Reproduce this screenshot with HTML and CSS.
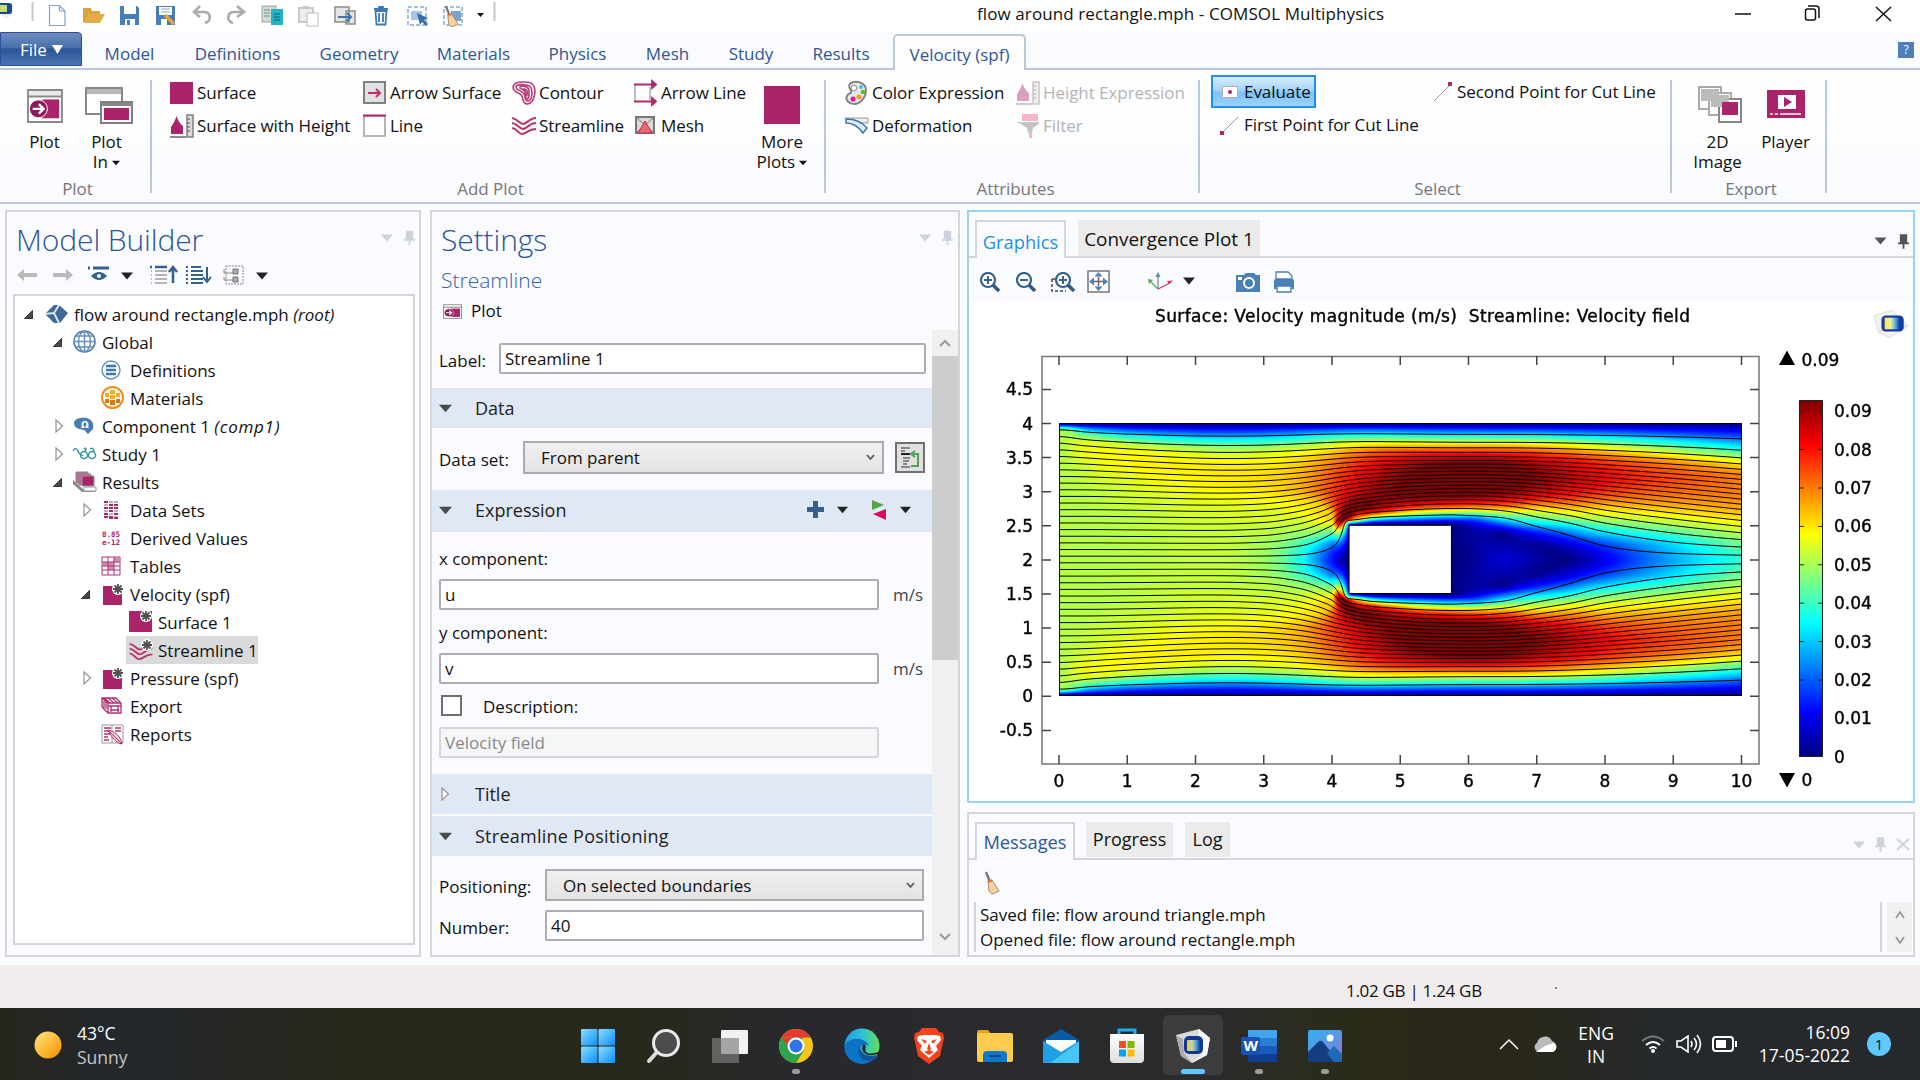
FILE: index.html
```html
<!DOCTYPE html>
<html lang="en">
<head>
<meta charset="utf-8">
<title>flow around rectangle.mph - COMSOL Multiphysics</title>
<link rel="stylesheet" href="styles.css">
</head>
<body>
<svg class="defs" width="0" height="0">
  <defs>
    <linearGradient id="gSun" x1="0" y1="0" x2="1" y2="1"><stop offset="0" stop-color="#ffe680"/><stop offset=".5" stop-color="#fdbb3a"/><stop offset="1" stop-color="#f98a06"/></linearGradient>
    <linearGradient id="gWin" x1="0" y1="0" x2="1" y2="1"><stop offset="0" stop-color="#8adfff"/><stop offset="1" stop-color="#0a8fff"/></linearGradient>
    <linearGradient id="gJet" x1="0" y1="0" x2="0" y2="1"><stop offset="0" stop-color="#800000"/><stop offset=".125" stop-color="#ff0000"/><stop offset=".375" stop-color="#ffff00"/><stop offset=".625" stop-color="#00ffff"/><stop offset=".875" stop-color="#0000ff"/><stop offset="1" stop-color="#000080"/></linearGradient>
    <linearGradient id="gLogo" x1="0" y1="0" x2="1" y2="0"><stop offset="0" stop-color="#ffe25a"/><stop offset=".4" stop-color="#f2f08a"/><stop offset=".7" stop-color="#58b8e8"/><stop offset="1" stop-color="#153aa0"/></linearGradient>
    <linearGradient id="gEdge" x1="0" y1="0" x2="1" y2="0"><stop offset="0" stop-color="#1b9de2"/><stop offset=".5" stop-color="#2fc0d8"/><stop offset="1" stop-color="#5fe05a"/></linearGradient>
    <linearGradient id="gStore" x1="0" y1="0" x2="0" y2="1"><stop offset="0" stop-color="#ffffff"/><stop offset="1" stop-color="#dedede"/></linearGradient>
    <linearGradient id="gPhoto" x1="0" y1="0" x2="1" y2="1"><stop offset="0" stop-color="#2fb2f2"/><stop offset="1" stop-color="#8a7ad8"/></linearGradient>
    <symbol id="caret" viewBox="0 0 12 8"><path d="M0 .5h12L6 7.500z" fill="currentColor"/></symbol>
    <symbol id="pin" viewBox="0 0 12 16"><path d="M2 0h8v9h2v2H7v5H5v-5H0V9h2z" fill="currentColor"/></symbol>
    <symbol id="open" viewBox="0 0 10 10"><path d="M9.5 .5v9H.5z" fill="#4a4a4a" stroke="#222"/></symbol>
    <symbol id="closed" viewBox="0 0 9 14"><path d="M1 1l6.500 6-6.500 6z" fill="#fff" stroke="#999" stroke-width="1.300"/></symbol>
    <symbol id="broom" viewBox="0 0 16 24"><path d="M2 1l4 10" stroke="#777" stroke-width="2.4" fill="none"/><path d="M4 10l4-1 7 11-4 2-3 1-3-3z" fill="#f3d3a4" stroke="#a98a5e"/><path d="M4 11l4-1.500" stroke="#e77439" stroke-width="2"/></symbol>
    <symbol id="plotwin" viewBox="0 0 38 36"><path d="M1 1h36v34H1z" fill="#fff" stroke="#8a8a8a" stroke-width="2"/><path d="M2 2h34v5H2z" fill="#e8ece8"/><path d="M1 8h36" stroke="#8a8a8a" stroke-width="2"/><path d="M16 11h18v20H16z" fill="#ab2369"/><circle cx="12" cy="21" r="9.500" fill="#8b1a5c" stroke="#fff"/><path d="M6 21h11M12.500 16l5 5-5 5" stroke="#fff" stroke-width="2.500" fill="none"/></symbol>
    <symbol id="stream" viewBox="0 0 24 20"><path d="M0 2c6 1 7 6 11 6s6-6 13-6M0 7c6 1 7 6 11 6s6-6 13-6M0 12c6 1 6 6 10 6s6-5 14-5" fill="none" stroke="#b8356f" stroke-width="2"/></symbol>
    <symbol id="peak" viewBox="0 0 24 24"><path d="M1 20V13C3 10 5 7 6.500 2c2 6 4 8 6.500 10v8z" fill="#ab2369"/><path d="M0 23h16" stroke="#8a8a8a" stroke-width="2"/><path d="M17 1h6v22h-6z" fill="#d9d9d9" stroke="#808080" stroke-width="1.500"/><path d="M17 5h3M17 9h3M17 13h3M17 17h3" stroke="#555"/></symbol>
    <symbol id="star" viewBox="0 0 12 12"><circle cx="6" cy="6" r="6" fill="#fff"/><path d="M6 1v10M1 6h10M2.500 2.500l7 7M9.500 2.500l-7 7" stroke="#505050" stroke-width="1.800"/></symbol>
    <symbol id="surf" viewBox="0 0 22 22"><path d="M1 3h19v19H1z" fill="#ab2369"/><use href="#star" x="10" y="0" width="12" height="12"/></symbol>
    <symbol id="mag" viewBox="0 0 22 20"><path d="M14 13l6 6" stroke="#35597f" stroke-width="3.500"/><circle cx="9" cy="8" r="7" fill="#fff" stroke="#35608f" stroke-width="2.200"/></symbol>
    <symbol id="logo" viewBox="0 0 34 28"><path d="M1 6L18 1l15 15-17 11-11-5z" fill="#f1f1f1" stroke="#e2e2e2"/><path d="M5 22l12-6 16 0" fill="none" stroke="#dedede"/><rect x="8" y="6" width="21" height="15" rx="4" fill="#153aa0"/><rect x="11" y="8" width="14" height="11" fill="url(#gLogo)"/></symbol>
  </defs>
</svg>

<header class="titlebar">
  <svg class="quick" width="510" height="32" viewBox="0 0 510 32">
    <path d="M0 12l13-10v12L6 19z" fill="#eee"/><rect x="-2" y="3" width="14" height="11" rx="3" fill="#17479c"/><rect x="0" y="5" width="7" height="7" fill="#c5dc73"/>
    <path d="M32.500 2v19M494.500 2v19" stroke="#c8c8c8" stroke-width="2"/>
    <path d="M49.500 5.500h10l5.500 5.500v14.500H49.500zM59.500 5.500V11H65" fill="#fff" stroke="#7fa3ca" stroke-width="1.200"/>
    <path d="M83 22V8h8l1 3h8v4h-9l-4 8z" fill="#dca23e"/><path d="M88 14h17l-5 9H84z" fill="#e3aa48"/>
    <path d="M120 6h17l2 2v17h-19z" fill="#477db8"/><path d="M124 6h12v8h-12zM125 19h10v6h-10z" fill="#fff"/><path d="M127 20h3v5h-3z" fill="#477db8"/>
    <path d="M156 6h19v19h-19z" fill="#477db8"/><path d="M159 7h13v8h-13zM161 19h6v6h-6z" fill="#fff"/><path d="M161 9h9M161 12h9" stroke="#8ba9c9"/><path d="M165 15l9 9" stroke="#e7a33d" stroke-width="3.500"/>
    <path d="M200 6l-6 6 6 5M195 12h9c7 0 8 9 1 11" fill="none" stroke="#ababab" stroke-width="2.600"/>
    <path d="M237 6l7 6-7 5M243 12h-9c-7 0-8 9-1 11" fill="none" stroke="#ababab" stroke-width="2.600"/>
    <path d="M262 6h14v16h-14z" fill="#d5dbd8" stroke="#9ba39f"/><path d="M264 10h6M264 13h6M264 16h6" stroke="#5c9c78"/><path d="M271 9h12v16h-12z" fill="#25b2c4"/><path d="M274 14h6M274 17h6M274 20h6" stroke="#0a6675"/>
    <path d="M299 8h14v14h-14z" fill="#eee" stroke="#c9c9c9" stroke-width="2"/><path d="M303 6h6v3h-6z" fill="#c9c9c9"/><path d="M307 13h11v13h-11z" fill="#fff" stroke="#bbb"/>
    <path d="M335 7h14v15h-14zM346 11h9v13h-9z" fill="#e5e5e5" stroke="#8c8c8c" stroke-width="1.500"/><path d="M338 17h12M347 13l4 4-4 4" fill="none" stroke="#3b73b6" stroke-width="2"/>
    <path d="M375.500 11h11l-1 13.500h-9zM374 9h14M379 9V7h4v2M379 13v9M383 13v9" fill="none" stroke="#3c79bb" stroke-width="1.800"/>
    <path d="M408 7h18v18h-18z" fill="none" stroke="#4c7eb5" stroke-dasharray="4 2"/><path d="M411 11h11v9h-11z" fill="#a9c4df"/><path d="M417 13l11 5-4 2 4 4-2 2-4-4-2 3z" fill="#3a6ea8"/>
    <path d="M444 7h18v18h-18z" fill="none" stroke="#4c7eb5" stroke-dasharray="4 2"/><path d="M451 11h10v10h-10z" fill="#78a2cf"/><use href="#broom" x="444" y="5" width="15" height="23"/>
    <use href="#caret" x="477" y="12" width="7" height="6"/>
  </svg>
  <h1 class="app-title">flow around rectangle.mph - COMSOL Multiphysics</h1>
  <svg class="winctl" width="160" height="32" viewBox="0 0 160 32" fill="none" stroke="#111" stroke-width="1.500"><path d="M0 14h16M141 7l15 14M156 7l-15 14"/><rect x="70.500" y="9" width="10" height="11" rx="2"/><path d="M73 6h8q3 0 3 3v9"/></svg>
</header>

<nav class="tabs">
  <span class="file">File <svg width="11" height="9"><path d="M0 0h11L5.500 9z" fill="#fff"/></svg></span>
  <span class="tab t1">Model</span><span class="tab t2">Definitions</span><span class="tab t3">Geometry</span><span class="tab t4">Materials</span><span class="tab t5">Physics</span><span class="tab t6">Mesh</span><span class="tab t7">Study</span><span class="tab t8">Results</span><span class="tab current">Velocity (spf)</span>
  <span class="help">?</span>
</nav>

<section class="ribbon">
  <div class="group g-plot">
    <div class="tools">
      <div class="big b1"><svg width="38" height="37"><use href="#plotwin" y="2" width="38" height="34"/></svg><span>Plot</span></div>
      <div class="big b2"><svg width="48" height="37"><path d="M1 1h36v26H1z" fill="#fff" stroke="#888" stroke-width="2"/><path d="M2 2h34v5H2z" fill="#b8b8b8"/><path d="M16 15h31v21H16z" fill="#fff" stroke="#808080" stroke-width="2"/><path d="M16 16h31v3H16z" fill="#888"/><path d="M19 21h25v12H19z" fill="#ab2369"/></svg><span>Plot<br>In <svg width="8" height="6"><use href="#caret" width="8" height="6"/></svg></span></div>
    </div>
    <div class="caption">Plot</div>
  </div>
  <div class="group g-add">
    <div class="tools cols">
      <div class="item"><svg width="24" height="24"><path d="M0 1h23v22H0z" fill="#ab2369"/></svg>Surface</div>
      <div class="item"><svg width="24" height="24"><path d="M1 1h21v21H1z" fill="#dfe3df" stroke="#808080" stroke-width="2"/><path d="M5 12h12M13 8l4 4-4 4" fill="none" stroke="#c02c70" stroke-width="2"/></svg>Arrow Surface</div>
      <div class="item"><svg width="24" height="24" fill="none" stroke="#bb3c76" stroke-width="1.600"><path d="M1 6C2 0 10 1 14 1c6 0 9 4 9 9 0 6-3 13-8 13-4 0-4-5-5-8-2-4-9-3-9-9z"/><path d="M4 6c1-4 7-2 10-2 5 0 6 4 6 8 0 5-2 8-4 8-4 0-2-4-4-7-2-4-8-3-8-7zM8 6c2-2 9-1 9 4s0 8-2 8-1-4-2-7-6-3-5-5zM12 8c3 0 4 2 3 6-2-1-1-4-3-6z"/></svg>Contour</div>
      <div class="item"><svg width="24" height="24" fill="none"><path d="M1 4v17M16 6v13" stroke="#aaa" stroke-width="1.500"/><path d="M0 3.500h20M0 20.500h20M18 0l4 3.500L18 7zM18 17l4 3.500-4 3.500z" stroke="#b02868" stroke-width="1.800" fill="#b02868"/></svg>Arrow Line</div>
      <div class="item"><svg width="24" height="24"><use href="#peak" width="24" height="24"/></svg>Surface with Height</div>
      <div class="item"><svg width="24" height="24"><path d="M1 2h21v20H1z" fill="#fff" stroke="#b5b5b5" stroke-width="2"/><path d="M0 1.500h23" stroke="#b02868" stroke-width="2"/></svg>Line</div>
      <div class="item"><svg width="24" height="20"><use href="#stream" width="24" height="20"/></svg>Streamline</div>
      <div class="item"><svg width="24" height="24"><path d="M2 3h18v16H2z" fill="#d8d8d8" stroke="#777" stroke-width="2"/><path d="M2 3l18 16M20 3L2 19" stroke="#777"/><path d="M11 7l7 12H4z" fill="#e46a72" stroke="#d0254b"/></svg>Mesh</div>
      <div class="big more"><svg width="36" height="38"><path d="M0 0h36v38H0z" fill="#ab2369"/></svg><span>More<br>Plots <svg width="8" height="6"><use href="#caret" width="8" height="6"/></svg></span></div>
    </div>
    <div class="caption">Add Plot</div>
  </div>
  <div class="group g-attr">
    <div class="tools cols">
      <div class="item"><svg width="24" height="24"><path d="M6 2c6-3 15 0 15 7s-5 14-12 14c-5 0-9-4-7-8 1-3 5-2 4-5S2 5 6 2z" fill="#e7e9e6" stroke="#858585" stroke-width="2"/><circle cx="9" cy="7" r="2.800" fill="#fff" stroke="#888"/><circle cx="16" cy="6" r="2" fill="#3fc4e8"/><circle cx="18" cy="11" r="2.300" fill="#66bd22"/><circle cx="14" cy="16" r="2.500" fill="#f79e20"/><circle cx="8" cy="18" r="2.500" fill="#ec148c"/></svg>Color Expression</div>
      <div class="item off"><svg width="24" height="24"><use href="#peak" width="24" height="24"/></svg>Height Expression</div>
      <div class="item"><svg width="24" height="24"><path d="M0 4h23v5H10" fill="#eee" stroke="#999"/><path d="M1 5c9 0 16 3 21 9l-4 5C13 12 8 9 1 9z" fill="#dcebf7" stroke="#3e75a8" stroke-width="1.500"/></svg>Deformation</div>
      <div class="item off"><svg width="24" height="24"><path d="M6 0h16v7H6zM13 16h3v8h-3z" fill="#ef4d82"/><path d="M0 8h23v2l-6 4-1 5h-4l-1-5-6-4z" fill="#777"/></svg>Filter</div>
    </div>
    <div class="caption">Attributes</div>
  </div>
  <div class="group g-sel">
    <div class="tools cols">
      <div class="item evaluate"><svg width="17" height="12"><path d="M.5.500h15v11H.5z" fill="#fff" stroke="#b9a9b5"/><circle cx="8" cy="6" r="2" fill="#b02868"/></svg>Evaluate</div>
      <div class="item"><svg width="20" height="20"><path d="M2 19L18 3" stroke="#999"/><path d="M16 0h4v4h-4z" fill="#b02868"/></svg>Second Point for Cut Line</div>
      <div class="item first"><svg width="20" height="20"><path d="M2 18L18 2" stroke="#999"/><path d="M0 16h4v4H0z" fill="#b02868"/></svg>First Point for Cut Line</div>
    </div>
    <div class="caption">Select</div>
  </div>
  <div class="group g-exp">
    <div class="tools">
      <div class="big b1"><svg width="44" height="37"><g fill="#fff" stroke="#aaa" stroke-width="2"><path d="M1 1h22v22H1z"/><path d="M11 7h22v22H11z"/><path d="M21 13h22v23H21z" stroke="#888"/></g><path d="M3 3h18v12H3zM13 9h18v12H13z" fill="#b9bcb9"/><path d="M24 16h16v13H24z" fill="#ab2369"/></svg><span>2D<br>Image</span></div>
      <div class="big b2"><svg width="38" height="37"><path d="M0 4h38v28H0z" fill="#ab2369"/><path d="M11 9h18v14H11z" fill="#fff"/><path d="M17 11l8 5-8 5z" fill="#ab2369"/><path d="M3 28h3M8 28h3M13 28h21" stroke="#e8bcd2" stroke-width="2"/></svg><span>Player</span></div>
    </div>
    <div class="caption">Export</div>
  </div>
</section>

<main class="workspace">
  <section class="panel builder">
    <div class="panel-head"><h2>Model Builder</h2><span class="dock"><svg width="12" height="8"><use href="#caret"/></svg><svg width="11" height="16"><use href="#pin"/></svg></span></div>
    <svg class="tree-tools" width="260" height="24" viewBox="0 0 260 24" fill="none">
      <path d="M0 12l7-6v4h13v4H7v4zM56 12l-7-6v4H36v4h13v4z" fill="#b9b9b9"/>
      <path d="M71 5h2M76 5h16" stroke="#35608f" stroke-width="3"/><path d="M74 13q8-8 16 0-8 8-16 0z" fill="#35608f"/><circle cx="82" cy="13" r="2" fill="#fff"/>
      <use href="#caret" x="104" y="9" width="12" height="8" color="#222"/>
      <path d="M133 4h2M138 4h12M156 20V6M152 9l4-5 4 5" stroke="#35608f" stroke-width="2.500"/><path d="M134 8h1M138 8h12M134 12h1M138 12h12M134 16h1M138 16h12M134 20h1M138 20h12" stroke="#b4b4b4" stroke-width="1.800"/>
      <path d="M169 4h2M174 4h10M190 4v14M186 14l4 5 4-5M169 8h2M174 8h12M169 12h2M174 12h12M169 16h2M174 16h12M169 20h2M174 20h12" stroke="#35608f" stroke-width="2"/>
      <path d="M209 3h17v18h-17z" stroke="#888" stroke-dasharray="2 1"/><path d="M207 6v4h9M207 14v3h9" stroke="#888"/><path d="M216 6h5v5h-5zM216 14h5v5h-5z" fill="#aaa" stroke="#777"/>
      <use href="#caret" x="239" y="9" width="12" height="8" color="#222"/>
    </svg>
    <ul class="tree">
      <li class="l0"><svg class="tw" width="9" height="9"><use href="#open"/></svg><svg class="ic" width="23" height="20"><path d="M0 10L9 1h5l9 8-8 10H9z" fill="#3f6799"/><path d="M0 10l9-1 5 10M9 9L14 1" fill="none" stroke="#dbe6f1" stroke-width="2"/></svg><span>flow around rectangle.mph <i>(root)</i></span></li>
      <li class="l1"><svg class="tw" width="9" height="9"><use href="#open"/></svg><svg class="ic" width="24" height="24" fill="none" stroke="#6a8fb8" stroke-width="1.500"><circle cx="11.500" cy="11.500" r="10.500" stroke="#4c79ac"/><ellipse cx="11.500" cy="11.500" rx="6" ry="10"/><path d="M11.500 1v21M1 11.500h21M3 6h17M3 17h17"/></svg><span>Global</span></li>
      <li class="l2"><svg class="ic" width="21" height="21"><circle cx="10" cy="10" r="9" fill="#fff" stroke="#5f90c2" stroke-width="1.400"/><path d="M5 6h10M5 10h10M5 14h10" stroke="#3b76b5" stroke-width="2.400"/></svg><span>Definitions</span></li>
      <li class="l2"><svg class="ic" width="24" height="24"><circle cx="11.500" cy="11.500" r="10.500" fill="#fff8ec" stroke="#f08c1d" stroke-width="2"/><path d="M9 4h5v4H9zM4 7h4v4H4zM15 7h4v4h-4zM9 9h5v4H9z" fill="#f5ad25"/><path d="M4 13h4v4H4zM9 14h5v5H9zM15 13h4v4h-4z" fill="#d97a12"/></svg><span>Materials</span></li>
      <li class="l1"><svg class="tw shut" width="9" height="14"><use href="#closed"/></svg><svg class="ic" width="22" height="18"><path d="M1 6C1 1 9 0 14 1c6 2 7 7 6 11l-5 5c-2-1-2-3-4-4C7 12 1 12 1 6z" fill="#477db3"/><text x="8" y="11" class="omega">Ω</text></svg><span>Component 1 <i class="wide">(comp1)</i></span></li>
      <li class="l1"><svg class="tw shut" width="9" height="14"><use href="#closed"/></svg><svg class="ic" width="24" height="14" fill="none" stroke="#3998a8" stroke-width="1.500"><path d="M0 4c2-4 4-3 6 2l4 3M11 2c2-2 3 0 1 2M17 2c3-2 4 1 4 4"/><circle cx="11" cy="8" r="3.500"/><circle cx="19" cy="8" r="3.500"/></svg><span>Study 1</span></li>
      <li class="l1"><svg class="tw" width="9" height="9"><use href="#open"/></svg><svg class="ic" width="24" height="22"><path d="M0 9l11 10h11v2H9L0 13z" fill="#888"/><path d="M3 1h12v11H3zM6 3h12v11H6z" fill="#c46798" stroke="#888"/><path d="M9 5h12v10H9z" fill="#ab2369" stroke="#999"/><path d="M11 16h12v4H11z" fill="#fff" stroke="#999"/></svg><span>Results</span></li>
      <li class="l2"><svg class="tw shut" width="9" height="14"><use href="#closed"/></svg><svg class="ic" width="18" height="19" fill="none" stroke-width="2"><g stroke="#b4b4b4" stroke-dasharray="4 1"><path d="M3 1h15M3 7h15M3 13h15M3 10h15M3 4h15M3 16h15"/></g><g stroke="#a82a68" stroke-dasharray="4 1"><path d="M3 1h4M8 4h9M3 7h14M8 10h4M3 13h4M13 13h4M3 16h9M8 17h9"/></g></svg><span>Data Sets</span></li>
      <li class="l2"><svg class="ic" width="20" height="18"><text x="1" y="8" class="dv">8.85</text><text x="1" y="16" class="dv">e-12</text></svg><span>Derived Values</span></li>
      <li class="l2"><svg class="ic" width="20" height="20"><path d="M1 1h18v18H1z" fill="#fff" stroke="#b03070"/><path d="M13 1h6v5h-6zM1 6h12v4h0v4H7v-4H1z" fill="#d08bad"/><path d="M1 6h18M1 10h18M1 14h18M7 1v18M13 1v18" stroke="#b03070"/></svg><span>Tables</span></li>
      <li class="l2"><svg class="tw" width="9" height="9"><use href="#open"/></svg><svg class="ic" width="22" height="22"><use href="#surf"/></svg><span>Velocity (spf)</span></li>
      <li class="l3"><svg class="ic" width="24" height="24"><path d="M0 1h23v21H0z" fill="#ab2369"/><use href="#star" x="11" width="12" height="12"/></svg><span>Surface 1</span></li>
      <li class="l3 selected"><svg class="ic" width="24" height="22"><use href="#stream" y="3" width="24" height="19"/><use href="#star" x="12" width="12" height="12"/></svg><span>Streamline 1</span></li>
      <li class="l2"><svg class="tw shut" width="9" height="14"><use href="#closed"/></svg><svg class="ic" width="22" height="22"><use href="#surf"/></svg><span>Pressure (spf)</span></li>
      <li class="l2"><svg class="ic" width="21" height="18" fill="none" stroke="#b03070" stroke-width="1.300"><path d="M1 1h14l5 5v10H7L1 10zM1 1l6 5h13M7 6v10M7 9h13M10 13h8M3 1l6 5M7 1l6 5M11 1l6 5M3 4v7M5 5v7M10 9v6M17 9v6"/></svg><span>Export</span></li>
      <li class="l2"><svg class="ic" width="23" height="21"><path d="M1 1h21v18H1zM11 1v18" fill="#fff" stroke="#999"/><path d="M3 4h7M3 7h6M3 10h6M3 13h4M3 16h5M14 4h6M14 7h6" stroke="#b03070" stroke-width="1.500"/><path d="M7 6c6 1 13 6 14 14-6-1-10-6-14-14zM8 7l13 13" fill="#f1cddc" stroke="#b03070"/></svg><span>Reports</span></li>
    </ul>
  </section>

  <section class="panel settings">
    <div class="panel-head"><h2>Settings</h2><span class="dock"><svg width="12" height="8"><use href="#caret"/></svg><svg width="11" height="16"><use href="#pin"/></svg></span></div>
    <h3>Streamline</h3>
    <div class="plot-btn"><svg width="19" height="15" viewBox="0 0 38 36" preserveAspectRatio="none"><use href="#plotwin" width="38" height="36"/></svg>Plot</div>
    <div class="scroll-area">
      <div class="form">
        <div class="row r-label"><label>Label:</label><span class="input">Streamline 1</span></div>
        <div class="section"><svg width="13" height="9"><use href="#caret"/></svg>Data</div>
        <div class="row r-data"><label>Data set:</label><span class="select">From parent<svg width="9" height="7"><path d="M1 1l3.500 4L8 1" fill="none" stroke="#555" stroke-width="1.800"/></svg></span><span class="tool"><svg width="20" height="22" fill="none"><path d="M1 2h9M1 5h4M3 12h7M3 15h6M3 18h4M1 21h9" stroke="#888" stroke-width="2"/><path d="M1 8h9" stroke="#222" stroke-width="2"/><path d="M11 20h7V8h-5M15 5l-4 3 4 3" stroke="#51a351" stroke-width="2"/></svg></span></div>
        <div class="section expr"><svg width="13" height="9"><use href="#caret"/></svg>Expression
          <svg class="expr-tools" width="108" height="22"><path d="M0 10.500h17M8.500 2v17" stroke="#35608f" stroke-width="5"/><use href="#caret" x="30" y="7" width="11" height="8" color="#222"/><path d="M65 1l12 5-12 5z" fill="#52a447"/><path d="M79 10v11l-13-6z" fill="#d80c5e"/><use href="#caret" x="93" y="7" width="11" height="8" color="#222"/></svg></div>
        <div class="lbl c1">x component:</div>
        <div class="row r-comp"><span class="input">u</span><span class="unit">m/s</span></div>
        <div class="lbl c2">y component:</div>
        <div class="row r-comp"><span class="input">v</span><span class="unit">m/s</span></div>
        <div class="row r-check"><span class="check"></span><span class="desc">Description:</span></div>
        <div class="row r-comp"><span class="input disabled">Velocity field</span></div>
        <div class="section s-title"><svg width="9" height="14"><use href="#closed"/></svg>Title</div>
        <div class="section s-pos"><svg width="13" height="9"><use href="#caret"/></svg>Streamline Positioning</div>
        <div class="row r-pos"><label>Positioning:</label><span class="select">On selected boundaries<svg width="9" height="7"><path d="M1 1l3.500 4L8 1" fill="none" stroke="#555" stroke-width="1.800"/></svg></span></div>
        <div class="row r-num"><label>Number:</label><span class="input">40</span></div>
      </div>
      <div class="scrollbar"><span class="sb-btn"><svg width="12" height="8"><path d="M1 7l5-5 5 5" fill="none" stroke="#999" stroke-width="2"/></svg></span><span class="thumb"></span><span class="sb-btn end"><svg width="12" height="8"><path d="M1 1l5 5 5-5" fill="none" stroke="#999" stroke-width="2"/></svg></span></div>
    </div>
  </section>

  <div class="right">
    <section class="panel graphics">
      <div class="ptabs"><span class="ptab active">Graphics</span><span class="ptab conv">Convergence Plot 1</span><span class="dock dark"><svg width="13" height="8"><use href="#caret"/></svg><svg width="11" height="15"><use href="#pin"/></svg></span></div>
      <svg class="gtools" width="330" height="37" viewBox="0 0 330 37" fill="none">
        <use href="#mag" x="9" y="8" width="22" height="20"/><path d="M14 16h8M18 12v8" stroke="#35608f" stroke-width="2"/>
        <use href="#mag" x="45" y="8" width="22" height="20"/><path d="M50 16h8" stroke="#35608f" stroke-width="2"/>
        <path d="M82 15v12h14M82 15h6" stroke="#444" stroke-dasharray="3 2" stroke-width="1.500"/><use href="#mag" x="84" y="8" width="22" height="20"/><path d="M89 16h8M93 12v8" stroke="#35608f" stroke-width="2"/>
        <path d="M118 7h21v21h-21z" fill="#fff" stroke="#777" stroke-width="1.500"/><path d="M128.500 8l4 4.500h-8zM128.500 27l4-4.500h-8zM119 17.500l5-4v8zM138 17.500l-5-4v8z" fill="#4b80b8"/><path d="M124 17.500h9M128.500 13v9" stroke="#666" stroke-width="1.500"/>
        <path d="M188 24V11" stroke="#5e87b4" stroke-width="1.200"/><path d="M185.500 13l2.500-5 2.500 5z" fill="#5e87b4"/><path d="M188 25l-7-7" stroke="#58aa50" stroke-width="1.200"/><path d="M178 15l5 1-4 4z" fill="#58aa50"/><path d="M188 25l12-6" stroke="#d6336c" stroke-width="1.200"/><path d="M197 17l6-.5-4 4z" fill="#d6336c"/>
        <use href="#caret" x="213" y="13" width="12" height="8" color="#222"/>
        <path d="M266 11h8l2-2h8l2 2h4v17h-24z" fill="#4b80b8"/><circle cx="279" cy="19" r="5" stroke="#fff" stroke-width="2"/><path d="M268 13h4v3h-4z" fill="#fff"/>
        <path d="M304 17q0-2 2-2h16q2 0 2 2v8h-20z" fill="#4b80b8"/><path d="M306 8h12l4 4v3h-16zM307 22h14v6h-14z" fill="#fff" stroke="#4b80b8" stroke-width="1.300"/>
      </svg>
      <div class="plot">
        <canvas id="field" width="683" height="273"></canvas>
        <svg class="axes" width="943" height="500" viewBox="969 301 943 500">
          <text x="1155" y="322" textLength="535" class="ptitle" xml:space="preserve">Surface: Velocity magnitude (m/s)  Streamline: Velocity field</text>
          <g id="ticks" fill="none" stroke="#444" stroke-width="1.500"><path d="M1042 356.500h717v407.500H1042z" stroke="#777"/></g>
          <g id="labels"></g>
          <rect x="1799.500" y="400.500" width="23" height="356" fill="url(#gJet)" stroke="#222"/>
          <g id="bar"></g>
          <path d="M1779 365l8-14.500 8 14.500zM1779 773l8 14.500 8-14.500z"/>
          <text x="1801.500" y="366">0.09</text><text x="1801.500" y="786">0</text>
          <use href="#logo" x="1873" y="309" width="36" height="30"/>
        </svg>
      </div>
    </section>
    <section class="panel messages">
      <div class="ptabs"><span class="ptab active">Messages</span><span class="ptab prog">Progress</span><span class="ptab log">Log</span><span class="dock"><svg width="12" height="8"><use href="#caret"/></svg><svg width="11" height="15"><use href="#pin"/></svg><svg width="14" height="13"><path d="M1 1l12 11M13 1L1 12" stroke="currentColor" stroke-width="2"/></svg></span></div>
      <svg class="sweep" width="16" height="24"><use href="#broom"/></svg>
      <div class="log-row"><div class="log-text">Saved file: flow around triangle.mph<br>Opened file: flow around rectangle.mph</div>
      <div class="log-sb"><svg width="10" height="8"><path d="M1 7l4-6 4 6" fill="none" stroke="#999" stroke-width="1.800"/></svg><svg width="10" height="8"><path d="M1 1l4 6 4-6" fill="none" stroke="#999" stroke-width="1.800"/></svg></div></div>
    </section>
  </div>
</main>

<footer class="status"><span class="mem">1.02 GB | 1.24 GB</span><span class="dot"></span></footer>

<div class="taskbar">
  <div class="weather"><svg width="28" height="28"><circle cx="14" cy="14" r="13.500" fill="url(#gSun)"/></svg><span>43°C<br><em>Sunny</em></span></div>
  <div class="apps">
    <span class="app"><svg width="36" height="36"><g fill="url(#gWin)"><rect x="1" y="1" width="16.500" height="16.500" rx="1"/><rect x="18.500" y="1" width="16.500" height="16.500" rx="1"/><rect x="1" y="18.500" width="16.500" height="16.500" rx="1"/><rect x="18.500" y="18.500" width="16.500" height="16.500" rx="1"/></g></svg></span>
    <span class="app"><svg width="36" height="36"><path d="M11 24L3 33" stroke="#dcdcdc" stroke-width="4" stroke-linecap="round"/><circle cx="20" cy="15" r="12.500" fill="#4a4c4d" stroke="#e9e9e9" stroke-width="3"/></svg></span>
    <span class="app"><svg width="38" height="36"><rect x="10" y="2" width="27" height="24" rx="1" fill="#f2f2f2"/><rect x="1" y="10" width="27" height="25" rx="1" fill="#626262"/><path d="M10 10h18v16H10z" fill="#a5a5a5"/></svg></span>
    <span class="app run"><svg width="36" height="36"><circle cx="18" cy="18" r="17" fill="#f6c51b"/><path d="M3.300 9.500A17 17 0 0 1 32.700 9.500H18z" fill="#e33b2e"/><path d="M3.300 9.500A17 17 0 0 0 18 35l8-12.500-8-4.500z" fill="#2da44e"/><path d="M3.300 9.500L11 23l7-5 7-8.500z" fill="#2da44e"/><path d="M3.300 9.500H33L18 10l-8 8z" fill="#e33b2e"/><circle cx="18" cy="18" r="8.500" fill="#fff"/><circle cx="18" cy="18" r="6.500" fill="#2f74e8"/></svg></span>
    <span class="app"><svg width="36" height="36"><circle cx="18" cy="18" r="17.500" fill="url(#gEdge)"/><path d="M1 17c3-8 20-9 24 1-6-3-10 0-9 6 1 5 7 9 14 7-8 7-18 5-23 1-5-4-7-9-6-15z" fill="#0b74c9"/><path d="M16 18c-4 6 0 15 9 15 5 0 8-3 9-6-6 2-18 1-18-9z" fill="#1054a2"/><path d="M20 16c4 3 0 5 2 8 4 3 10 1 14-1v5l-3-2c-7 3-15 0-15-6 0-2 1-3 2-4z" fill="#28292b"/></svg></span>
    <span class="app"><svg width="32" height="36"><path d="M9 0h14l3 4 4 1 1 5-1 4-3 14-11 8-11-8L2 14 1 10l1-5 4-1z" fill="#f4431c"/><path d="M5 8l6-1h10l6 1 1 4-5 6 2 4-9 8-9-8 2-4-5-6z" fill="#fff"/><path d="M8 11l6 2-2 3zM24 11l-6 2 2 3zM16 15l2 6-2 2-2-2zM11 24l5-2 5 2-5 3z" fill="#f4431c"/></svg></span>
    <span class="app"><svg width="38" height="36"><path d="M1 4q0-2 2-2h9l4 5H1z" fill="#e2a012"/><rect x="1" y="5" width="36" height="29" rx="2" fill="#fdcb4d"/><path d="M7 34V27q0-4 4-4h16q4 0 4 4v7z" fill="#1178c9"/><path d="M13 28h12" stroke="#0a4a8c" stroke-width="2"/></svg></span>
    <span class="app"><svg width="38" height="36"><path d="M1 12L19 1l18 11v3H1z" fill="#0a5ba3"/><path d="M4 12h30v16H4z" fill="#fff"/><path d="M1 13l18 11L37 13v22H1z" fill="#1f9fe5"/><path d="M37 14v21H8z" fill="#48c5f5"/></svg></span>
    <span class="app"><svg width="36" height="36"><path d="M10 8V2h16v6" fill="none" stroke="#28a8ea" stroke-width="3"/><path d="M1 6h34v25q0 4-4 4H5q-4 0-4-4z" fill="url(#gStore)"/><path d="M10 13h7v7h-7z" fill="#f25022"/><path d="M18.500 13h7v7h-7z" fill="#7fba00"/><path d="M10 21.500h7v7h-7z" fill="#00a4ef"/><path d="M18.500 21.500h7v7h-7z" fill="#ffb900"/></svg></span>
    <span class="app on"><svg width="36" height="36"><path d="M1 7L24 1l11 9-3 17-15 8-11-7z" fill="#d9dadb"/><path d="M24 1l-1 7 5 17-11 10 15-8 3-17z" fill="#f7f7f7"/><path d="M1 7l7 4 1 14 8 10-11-7z" fill="#a9abad"/><rect x="9" y="8" width="19" height="18" rx="5" fill="#14378c"/><rect x="12" y="12" width="13" height="11" rx="1" fill="url(#gLogo)" opacity=".85"/></svg></span>
    <span class="app run"><svg width="38" height="36"><rect x="8" y="2" width="29" height="32" rx="2" fill="#2b7cd3"/><path d="M8 2h29v8H8z" fill="#41a5ee"/><path d="M8 18h29v8H8z" fill="#185abd"/><path d="M8 26h29v8H8z" fill="#103f91"/><rect x="1" y="9" width="19" height="18" rx="2" fill="#1554b5"/><text x="3.500" y="23" class="w">W</text></svg></span>
    <span class="app run"><svg width="36" height="36"><rect x="1" y="2" width="34" height="32" rx="2" fill="url(#gPhoto)"/><path d="M1 24l11-11q2-1 4 1l16 20H1z" fill="#133f82"/><path d="M20 25l7-7 8 8v8h-8z" fill="#2268b8"/><circle cx="23" cy="10" r="3.500" fill="#fff"/></svg></span>
  </div>
  <div class="tray">
    <svg class="chev" width="20" height="12"><path d="M1 11l9-9 9 9" fill="none" stroke="#fff" stroke-width="1.500"/></svg>
    <svg class="cloud" width="25" height="17"><path d="M5 16a5 5 0 0 1-1-9A8 8 0 0 1 19 5a6 6 0 0 1 1 11z" fill="#bcbcbc"/><path d="M3 16l9-6 9-3a5 5 0 0 1-1 9z" fill="#fff"/></svg>
    <span class="lang">ENG<br>IN</span>
    <svg class="wifi" width="24" height="18" fill="none" stroke="#fff" stroke-width="2"><path d="M1 6q11-9 22 0" stroke="#777"/><path d="M5 10q7-6 14 0M8.500 13.500q3.500-3 7 0"/><circle cx="12" cy="16" r="1" fill="#fff"/></svg>
    <svg class="vol" width="25" height="20" fill="none" stroke="#fff" stroke-width="1.600"><path d="M1 7h4l7-5v16l-7-5H1zM15 7q2 3 0 6M18 4q5 6 0 12M21 1q7 9 0 18"/></svg>
    <svg class="bat" width="26" height="18"><rect x="1" y="2" width="20" height="14" rx="3" fill="none" stroke="#fff" stroke-width="2"/><path d="M4 5h10v8H4zM23 6h2v6h-2z" fill="#fff"/></svg>
    <span class="clock">16:09<br>17-05-2022</span>
    <span class="badge">1</span>
  </div>
</div>
<script src="plot.js"></script>
</body>
</html>
```
FILE: styles.css
```css
* { box-sizing: border-box; }
body { margin: 0; width: 1920px; height: 1080px; overflow: hidden; background: #fafbff; font: 17px/22px "Open Sans", "Noto Sans", sans-serif; color: #111; display: flex; flex-direction: column; }
h1, h2, h3, ul { margin: 0; padding: 0; font-weight: 400; }
svg { display: block; flex: none; overflow: visible; }
.defs { position: absolute; }

.titlebar { height: 32px; background: #fff; display: flex; flex: none; }
.app-title { margin-left: 467px; width: 758px; font-size: 17px; letter-spacing: .1px; line-height: 28px; white-space: nowrap; }

.tabs { height: 38px; flex: none; display: flex; align-items: flex-end; border-bottom: 2px solid #b9c8da; color: #2f5597; }
.file { width: 82px; height: 34px; margin-bottom: 2px; background: linear-gradient(#6c8cbf, #4a70ad 45%, #2c5598 50%, #4a74b2); border: 1px solid #29509a; border-radius: 0 4px 0 0; color: #fff; display: flex; align-items: center; padding: 1px 0 0 19px; gap: 5px; }
.tab { height: 34px; line-height: 40px; text-align: center; }
.t1 { width: 95px; } .t2 { width: 121px; } .t3 { width: 122px; } .t4 { width: 107px; }
.t5 { width: 101px; } .t6 { width: 79px; } .t7 { width: 88px; } .t8 { width: 92px; }
.current { width: 133px; margin: 0 0 -2px 6px; height: 36px; background: #fdfdfe; border: 2px solid #b9c8da; border-bottom: 0; border-radius: 5px 5px 0 0; line-height: 37px; }
.help { margin-left: auto; margin-right: 6px; align-self: flex-start; margin-top: 10px; width: 16px; height: 16px; background: #4b80b8; color: #fff; font-size: 12px; line-height: 16px; text-align: center; }

.ribbon { height: 134px; flex: none; display: flex; background: linear-gradient(#fff, #fafbff); border-bottom: 2px solid #b9c8da; letter-spacing: -.06px; }
.group { position: relative; display: flex; flex-direction: column; height: 132px; }
.group::after { content: ""; position: absolute; right: 0; top: 10px; width: 2px; height: 113px; background: #b9c8da; }
.g-plot { width: 152px; } .g-add { width: 674px; } .g-attr { width: 374px; } .g-sel { width: 472px; } .g-exp { width: 155px; }
.tools { height: 107px; display: flex; }
.caption { text-align: center; color: #777; line-height: 23px; padding-left: 3px; }
.g-attr .caption { padding-left: 5px; }
.item { display: flex; align-items: center; gap: 3px; height: 33px; white-space: nowrap; }
.off { color: #b4b4b4; }
.off svg { opacity: .42; }
.big { display: flex; flex-direction: column; align-items: center; text-align: center; }
.big > span { line-height: 20px; margin-top: 8px; white-space: nowrap; }
.big span svg { display: inline-block; vertical-align: 2px; }
.g-plot .tools { padding: 17px 0 0 20px; gap: 13px; }
.g-plot .big { width: 49px; }
.g-plot .b2 > svg { margin-left: 4px; }
.cols { display: grid; align-content: start; padding-top: 6px; }
.g-add .cols { grid-template: 33px 33px / 193px 149px 122px 113px 70px; padding-left: 18px; }
.more { grid-column: 5; grid-row: 1 / 3; margin-top: 10px; }
.g-attr .cols { grid-template-columns: 171px 1fr; padding-left: 19px; }
.g-attr .item { gap: 3px; }
.g-sel .cols { grid-template-columns: 221px 1fr; padding: 5px 0 0 11px; }
.g-sel .item { gap: 5px; }
.g-sel .first { padding-left: 9px; gap: 4px; }
.evaluate { width: 105px; border: 2px solid #1e90e8; background: linear-gradient(#d8ecfc, #a4d4fa 45%, #7cc2f8 55%, #9bd2fc); padding-left: 9px; gap: 5px !important; }
.g-exp .tools { padding: 16px 0 0 20px; gap: 11px; }
.g-exp .big { width: 55px; }
.g-exp .big > span { margin-top: 9px; margin-left: -4px; }
.g-exp .b2 > span { margin-left: 0; }

.workspace { height: 761px; flex: none; padding: 6px 5px 8px; display: flex; }
.panel { border: 2px solid #d3d5da; display: flex; flex-direction: column; }
.panel-head { display: flex; align-items: flex-start; justify-content: space-between; }
h2 { font-size: 30px; font-weight: 300; line-height: 40px; color: #2f5597; letter-spacing: -.1px; }
.dock { display: flex; gap: 11px; align-items: center; color: #cdd2dc; }
.dock.dark { color: #555; }
.builder { width: 416px; padding: 0 5px 10px 6px; }
.builder .panel-head { height: 50px; padding: 8px 0 0 3px; }
.panel-head .dock { margin-top: 10px; margin-right: -1px; }
.tree-tools { margin: 1px 0 7px 4px; }
.tree { list-style: none; border: 2px solid #d3d5da; background: #fff; flex: 1; padding-top: 4px; font-size: 17px; width: 402px; }
.tree li { height: 28px; display: flex; align-items: center; position: relative; white-space: nowrap; }
.tree li > span { padding-top: 1px; }
.wide { letter-spacing: .7px; }
.tw { position: absolute; }
.shut { margin-left: 2px; }
.ic { width: 24px; margin-right: 5px; display: block; }
.l0 { padding-left: 30px; } .l1 { padding-left: 58px; } .l2 { padding-left: 86px; } .l3 { padding-left: 114px; }
.l0 .tw { left: 9px; } .l1 .tw { left: 38px; } .l2 .tw { left: 66px; }
.tree li.selected { margin-left: 111px; padding-left: 3px; width: 132px; background: #dadadc; }
.omega { font: bold 9px "DejaVu Sans", sans-serif; fill: #fff; }
.dv { font: bold 7.500px "DejaVu Sans Mono", monospace; fill: #ab2369; }

.settings { width: 530px; margin-left: 9px; }
.settings .panel-head { height: 50px; padding: 8px 6px 0 9px; }
h3 { font-size: 21px; font-weight: 300; line-height: 26px; color: #3862a5; padding: 5px 0 0 9px; }
.plot-btn { display: flex; align-items: center; gap: 9px; height: 22px; margin: 7px 0 8px 11px; }
.scroll-area { display: flex; flex: 1; min-height: 0; }
.form { width: 501px; }
.row { display: flex; align-items: center; padding-left: 7px; height: 31px; }
.input { height: 31px; border: 2px solid #abadb3; border-radius: 2px; background: #fff; line-height: 28px; padding-left: 4px; }
.disabled { background: #f5f6f8; border-color: #d3d5d9; color: #888; }
.select { height: 33px; border: 2px solid #acacac; background: linear-gradient(#f0f0f0, #e3e3e3); line-height: 29px; padding: 0 7px 0 16px; display: flex; align-items: center; justify-content: space-between; }
.row label { padding-top: 4px; }
.section { height: 40px; background: #dfe8f4; font-size: 18px; display: flex; align-items: center; color: #222; }
.section > svg:first-child { color: #4a4a4a; width: 13px; margin: 0 23px 0 7px; }
.r-label { margin: 13px 0 14px; } .r-label label { width: 60px; } .r-label .input { width: 427px; }
.r-data { margin: 13px 0 16px; height: 33px; } .r-data label { width: 84px; } .r-data .select { width: 361px; }
.tool { margin-left: 11px; width: 30px; height: 31px; border: 2px solid #707070; background: #dfe0df; padding: 2px 3px; }
.expr { height: 42px; padding-bottom: 2px; } .expr-tools { margin-left: auto; margin-right: 17px; }
.lbl { padding-left: 7px; height: 47px; line-height: 53px; }
.c2 { height: 43px; line-height: 45px; }
.r-comp .input { width: 440px; }
.unit { margin-left: 14px; color: #444; }
.r-check { height: 43px; } .check { width: 21px; height: 21px; border: 2px solid #707070; background: #fff; margin: 0 21px 0 2px; }
.desc { padding-top: 2px; }
.s-title { margin: 16px 0 2px; }
.s-pos { letter-spacing: .25px; }
.r-pos { margin: 13px 0 9px; height: 32px; } .r-pos .select { height: 32px; } .r-pos label, .r-num label { width: 106px; } .r-pos .select { width: 379px; } .r-num .input { width: 379px; }
.scrollbar { width: 26px; background: #f0f0f0; display: flex; flex-direction: column; align-items: center; }
.sb-btn { height: 26px; display: flex; align-items: center; }
.thumb { width: 26px; height: 304px; background: #cdcdcd; }
.end { margin-top: auto; height: 22px; align-items: flex-start; }

.right { width: 948px; margin-left: 7px; display: flex; flex-direction: column; gap: 9px; }
.graphics { height: 593px; border-color: #99d1f8; }
.messages { height: 146px; }
.ptabs { height: 46px; border-bottom: 2px solid #d3d5da; padding: 8px 0 0 6px; display: flex; flex: none; }
.ptab { background: #ebebeb; font-size: 18px; text-align: center; height: 36px; line-height: 38px; white-space: nowrap; }
.ptab.active { background: #fafbff; border: 2px solid #d3d5da; border-bottom: 0; height: 38px; line-height: 40px; font-size: 18.300px; }
.graphics .active { color: #1e8fea; width: 91px; margin-right: 12px; }
.conv { width: 182px; font-size: 18.900px; }
.ptabs .dock { margin: 6px 4px 0 auto; }
.gtools { margin: 6px 0 0 1px; }
.plot { background: #fff; height: 500px; display: grid; }
.plot > * { grid-area: 1 / 1; }
#field { margin: 122px 0 0 90px; width: 683px; height: 273px; }
.axes { z-index: 1; }
.axes text { font: 17px "DejaVu Sans", sans-serif; fill: #000; stroke: #000; stroke-width: .4px; white-space: pre; }
.messages .active { color: #2f5597; width: 100px; margin-right: 11px; }
.messages .ptabs { height: 46px; }
.messages .ptab { height: 35px; line-height: 34px; }
.messages .ptab.active { height: 38px; line-height: 36px; }
.prog { width: 87px; margin-right: 12px; } .log { width: 45px; }
.messages .dock { margin: 9px 3px 0 auto; gap: 10px; }
.sweep { margin: 11px 0 7px 15px; }
.log-row { display: flex; height: 50px; }
.log-text { margin-left: 5px; width: 908px; border: solid #d3d5da; border-width: 0 2px; padding-left: 4px; line-height: 25px; }
.log-sb { margin-left: 5px; width: 25px; background: #f0f0f0; display: flex; flex-direction: column; align-items: center; justify-content: space-around; }

.status { height: 43px; flex: none; background: #f0edec; display: flex; align-items: center; padding: 8px 0 0 1346px; }
.mem { width: 209px; white-space: nowrap; letter-spacing: -.3px; } .dot { width: 2px; height: 2px; background: #888; margin-top: -5px; }

.taskbar { height: 72px; flex: none; color: #fff; display: flex; font-size: 17.500px; background: linear-gradient(90deg, #25271c 0, #24272d 6%, #26281b 18%, #27291a 32%, #27292e 42%, #2a2b2c 62%, #2b2b1a 70%, #292718 78%, #26292b 86%, #25282c 100%); }
.weather { width: 565px; display: flex; align-items: center; padding: 2px 0 0 34px; gap: 15px; line-height: 24px; }
.weather em { font-style: normal; color: #c4c4c4; }
.apps { display: flex; }
.app { width: 66.100px; height: 72px; display: flex; align-items: center; justify-content: center; position: relative; padding-top: 3px; }
.run::after, .on::after { content: ""; position: absolute; bottom: 6px; left: 29px; width: 8px; height: 5px; border-radius: 3px; background: #9b9b9b; }
.on::before { content: ""; position: absolute; left: 3px; top: 7px; width: 60px; height: 60px; border-radius: 5px; background: #3b3c3d; }
.on svg { position: relative; }
.on::after { left: 21px; width: 24px; background: #5ec8ff; }
.w { font: bold 15px "Open Sans", sans-serif; fill: #fff; }
.tray { margin-left: 141px; display: flex; align-items: center; line-height: 23px; }
.cloud { margin-left: 14px; }
.lang { width: 76px; text-align: center; padding-top: 1px; }
.wifi { margin-left: 7px; } .vol { margin-left: 11px; } .bat { margin-left: 11px; }
.clock { width: 112px; text-align: right; white-space: nowrap; line-height: 23px; }
.badge { margin-left: 17px; width: 24px; height: 24px; border-radius: 50%; background: #5ec8ff; color: #111; text-align: center; font-size: 15px; line-height: 24px; }
```
FILE: plot.js
```js
// Speed profiles (in 0.01 m/s) across half the channel, measured from the centreline.
const ETA = [0, .2, .4, .5, .6, .7, .8, 1, 1.2, 1.4, 1.6, 1.7, 1.8, 1.9, 2];
const STATIONS = [
  [0,    5, 5, 5, 5, 5, 5, 5, 5, 5, 5, 5, 5, 5, 4.8, 0],
  [.5,   5, 5, 5, 5, 5, 5, 5, 5.1, 5.2, 5.4, 5.7, 5.6, 4.5, 2.5, 0],
  [1,    5.1, 5.1, 5.1, 5.1, 5.1, 5.15, 5.2, 5.3, 5.5, 5.8, 5.7, 5, 3.8, 2, 0],
  [2.4,  5.25, 5.25, 5.3, 5.35, 5.4, 5.5, 5.6, 5.85, 6, 5.9, 5.1, 4.2, 2.9, 1.4, 0],
  [3,    4.9, 5, 5.2, 5.3, 5.5, 5.6, 5.8, 6, 6.1, 5.9, 5.3, 4.3, 3, 1.5, 0],
  [3.5,  3.8, 4.1, 4.9, 5.2, 5.5, 5.8, 6.1, 6.4, 6.4, 6.2, 5.6, 4.7, 3.4, 1.8, 0],
  [4,    1.3, 1.8, 3.8, 4.8, 5.8, 6.5, 6.9, 7.2, 7.2, 6.9, 6, 5.2, 3.9, 2.1, 0],
  [4.25, 0, 0, 0, .8, 7.2, 8.2, 8.2, 8, 7.8, 7.4, 6.5, 5.6, 4.2, 2.2, 0],
  [4.6,  0, 0, 0, 0, 4, 7.8, 8.9, 8.9, 8.5, 8, 7, 5.8, 4.2, 2.2, 0],
  [5.3,  0, 0, 0, 0, 2.4, 5.6, 7.7, 9.3, 9.4, 8.9, 7.3, 5.8, 4, 2, 0],
  [5.75, 0, 0, 0, 0, 2, 5, 7.3, 9.3, 9.5, 9, 7.2, 5.6, 3.8, 1.9, 0],
  [6,    -.1, -.1, .1, .5, 2, 4.7, 6.9, 9, 9.4, 9, 7.1, 5.6, 3.7, 1.8, 0],
  [6.5,  -.7, -.4, .3, 1.6, 3.2, 5, 6.7, 8.6, 9.1, 8.7, 7, 5.6, 3.7, 1.8, 0],
  [7,    -.3, .05, 1.3, 2.6, 4, 5.2, 6.4, 8.2, 8.7, 8.3, 6.8, 5.5, 3.7, 1.8, 0],
  [7.5,  .1, .7, 2.2, 3.3, 4.5, 5.5, 6.4, 7.8, 8.3, 8, 6.5, 5.2, 3.5, 1.7, 0],
  [8,    1, 1.6, 3.2, 4.1, 5, 5.7, 6.4, 7.5, 8, 7.6, 6.1, 4.8, 3.3, 1.6, 0],
  [9,    2.7, 3.1, 4.2, 4.9, 5.5, 6, 6.5, 7.1, 7.4, 6.9, 5.1, 3.9, 2.6, 1.3, 0],
  [10,   3.9, 4.4, 5.2, 5.6, 5.9, 6.3, 6.6, 6.9, 6.9, 6, 3.9, 2.9, 1.9, 1, 0]
];

// Monotone cubic interpolation.
function pchip(xs, ys) {
  const n = xs.length, h = [], d = [], m = [];
  for (let i = 0; i < n - 1; i++) { h[i] = xs[i + 1] - xs[i]; d[i] = (ys[i + 1] - ys[i]) / h[i]; }
  m[0] = 0; m[n - 1] = d[n - 2];
  for (let i = 1; i < n - 1; i++) {
    if (d[i - 1] * d[i] <= 0) m[i] = 0;
    else {
      const a = 2 * h[i] + h[i - 1], b = h[i] + 2 * h[i - 1];
      m[i] = (a + b) / (a / d[i - 1] + b / d[i]);
    }
  }
  let k = 0;
  return x => {
    while (k > 0 && x < xs[k]) k--;
    while (k < n - 2 && x > xs[k + 1]) k++;
    const t = (x - xs[k]) / h[k], t2 = t * t, t3 = t2 * t;
    return (2 * t3 - 3 * t2 + 1) * ys[k] + (t3 - 2 * t2 + t) * h[k] * m[k] + (3 * t2 - 2 * t3) * ys[k + 1] + (t3 - t2) * h[k] * m[k + 1];
  };
}

function jet(v) {
  const c = o => Math.max(0, Math.min(1, 1.5 - Math.abs(4 * v - o))) * 255;
  return [c(3), c(2), c(1)];
}

const W = 683, H = 273, N = 200;
const canvas = document.getElementById('field');
canvas.width = W; canvas.height = H;
const ctx = canvas.getContext('2d');
const byNode = ETA.map((e, j) => pchip(STATIONS.map(s => s[0]), STATIONS.map(s => s[j + 1])));

const RAW = [];
for (let i = 0; i < W; i++) {
  const x = i / (W - 1) * 10;
  const f = pchip(ETA, byNode.map(g => g(x)));
  const u = [], p = [0];
  for (let j = 0; j <= N; j++) {
    const e = j / N * 2;
    u[j] = x > 4.25 && x < 5.75 && e <= .5 ? 0 : f(e);
    if (j) p[j] = p[j - 1] + (u[j] + u[j - 1]) / N;
  }
  RAW.push(p.map(v => v * 10 / p[N]));
}

// Blur the stream function along the channel, more strongly away from the obstacle.
const PSI = RAW.map((col, i) => col.map((v, j) => {
  const t = Math.max(0, Math.min(1, (j / N * 2 - .5) / .5));
  const sigma = Math.min(20 * t * t * (3 - 2 * t), i / 2.5, (W - 1 - i) / 2.5);
  if (sigma < .7) return v;
  const r = Math.floor(sigma * 2.5);
  let sum = 0, weight = 0;
  for (let d = -r; d <= r; d++) {
    const w = Math.exp(-d * d / (2 * sigma * sigma));
    sum += w * RAW[i + d][j]; weight += w;
  }
  return sum / weight;
}));
const U = PSI.map(col => col.map((v, j) => {
  const a = Math.max(0, j - 1), b = Math.min(N, j + 1);
  return (col[b] - col[a]) / (b - a) * N / 2;
}));
U.forEach(col => { col[N] = 0; });

const img = ctx.createImageData(W, H);
for (let i = 0; i < W; i++) for (let r = 0; r < H; r++) {
  const e = Math.abs(1 - r / (H - 1) * 2) * N, j = Math.min(N - 1, Math.floor(e)), t = e - j;
  const at = (a, c) => a[c][j] * (1 - t) + a[c][j + 1] * t;
  const a = Math.max(0, i - 2), b = Math.min(W - 1, i + 2);
  const v = (at(PSI, b) - at(PSI, a)) / ((b - a) * 10 / (W - 1));
  const q = jet(Math.min(1, Math.hypot(at(U, i), v) / 9.25)), o = (r * W + i) * 4;
  img.data[o] = q[0]; img.data[o + 1] = q[1]; img.data[o + 2] = q[2]; img.data[o + 3] = 255;
}
ctx.putImageData(img, 0, 0);

// Streamlines: contours of the stream function seeded every 0.1 along the inlet.
ctx.strokeStyle = '#000'; ctx.lineWidth = 1;
for (let k = 0; k < 20; k++) {
  const level = .25 + .5 * k, pts = [];
  for (let i = 0; i < W; i++) {
    let j = N;
    while (j > 1 && PSI[i][j - 1] > level) j--;
    const t = (level - PSI[i][j - 1]) / (PSI[i][j] - PSI[i][j - 1]);
    pts.push((j - 1 + t) / N);
  }
  for (const sgn of [-1, 1]) {
    ctx.beginPath();
    pts.forEach((e, i) => ctx.lineTo(i, H / 2 + sgn * e * (H - 1) / 2));
    ctx.stroke();
  }
}
ctx.strokeRect(.5, .5, W - 1, H - 1);

// Solid obstacle: x 4.25-5.75, y 1.5-2.5.
const SX = 68.25, SY = 68.2;
ctx.fillStyle = '#fff';
ctx.fillRect(4.25 * SX, 1.5 * SY, 1.5 * SX, SY);
ctx.strokeRect(4.25 * SX, 1.5 * SY, 1.5 * SX, SY);

// Ticks and labels.
const X = v => 1059 + v * SX, Y = v => 696.3 - v * SY;
let ticks = '', labels = '', bar = '';
for (let v = 0; v <= 10; v++) {
  ticks += `<path d="M${X(v)} 356v9M${X(v)} 764v-9"/>`;
  labels += `<text x="${X(v)}" y="787" text-anchor="middle">${v}</text>`;
}
for (let v = -.5; v <= 4.5; v += .5) {
  ticks += `<path d="M1042 ${Y(v)}h9M1759 ${Y(v)}h-9"/>`;
  labels += `<text x="1033" y="${Y(v) + 6}" text-anchor="end">${v}</text>`;
}
for (let v = 0; v <= 9; v++) {
  const y = 756.8 - v * 38.4;
  if (v) bar += `<path d="M1800 ${y}h4M1822 ${y}h-4" stroke="#222"/>`;
  bar += `<text x="1834" y="${y + 6}">${v ? '0.0' + v : 0}</text>`;
}
document.getElementById('ticks').insertAdjacentHTML('beforeend', ticks);
document.getElementById('labels').innerHTML = labels;
document.getElementById('bar').innerHTML = bar;
```
